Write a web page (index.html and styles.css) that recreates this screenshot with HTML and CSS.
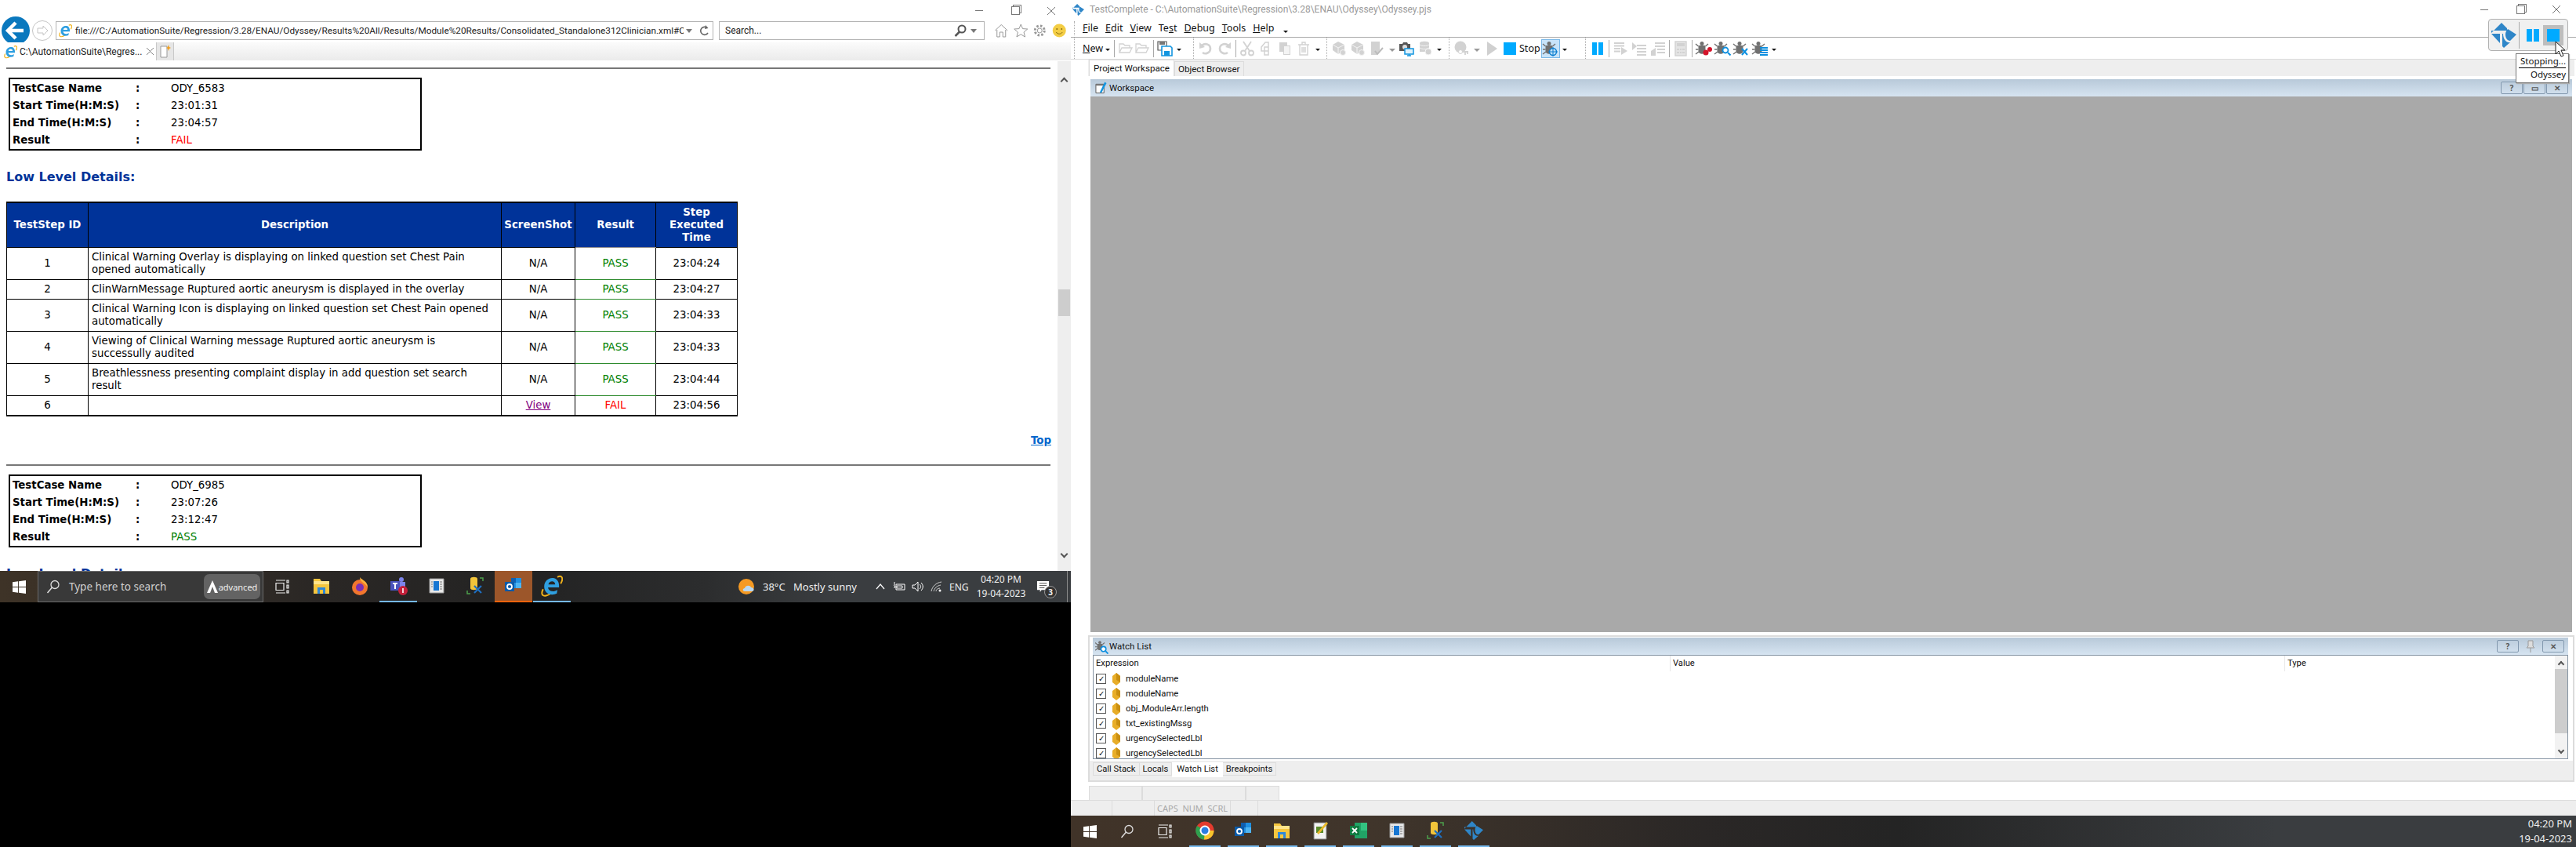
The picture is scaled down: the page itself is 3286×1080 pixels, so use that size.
FILE: index.html
```html
<!DOCTYPE html>
<html>
<head>
    <title>Consolidated results and TestComplete</title>
    <link rel="stylesheet" href="styles.css">
</head>
<body>

<svg class="defs" width="0" height="0">
    <symbol id="ie" viewBox="0 0 20 20">
        <path d="M2 13C-1 19 3 21 9 17M15 2C19 0 21 3 18 8" fill="none" stroke="#f2b31c" stroke-width="1.4"/>
        <path d="M16.5 11.5H6.5C7 15.500 12 16 15 13.500L14.500 17C9 19.500 3 17 3 10.500C3 5 8 2 12 3C15 3.700 17 7 16.500 11.500ZM6.800 8.700H13C13 5 7.500 5 6.800 8.700Z" fill="#2f9fe0"/>
    </symbol>
    <symbol id="winlogo" viewBox="0 0 18 18">
        <path d="M0 2.500 7.500 1.400V8.500H0ZM8.500 1.300 18 0V8.500H8.500ZM0 9.500H7.500V16.600L0 15.500ZM8.500 9.500H18V18L8.500 16.700Z" fill="#fff"/>
    </symbol>
    <symbol id="lens" viewBox="0 0 18 18">
        <circle cx="11" cy="6.500" r="5" fill="none" stroke="#ddd" stroke-width="1.300"/>
        <path d="M7.500 10 1.500 17" stroke="#ddd" stroke-width="1.500"/>
    </symbol>
    <symbol id="taskview" viewBox="0 0 18 18">
        <path d="M1 1H13M1 17H13M1 4.500H11V13.500H1ZM15 1H17V4H15ZM15 7H17V11H15ZM15 14H17V17H15Z" fill="none" stroke="#eee" stroke-width="1.200"/>
    </symbol>
    <symbol id="explorer" viewBox="0 0 24 24">
        <path d="M2 3H10L12 6H22V22H2Z" fill="#f5c63f"/>
        <path d="M2 6H22V10H2Z" fill="#ffe48a"/>
        <path d="M7 22V14H17V22H14V17H10V22Z" fill="#2f88d8"/>
    </symbol>
    <symbol id="box-app" viewBox="0 0 24 24">
        <path d="M3 3H21V21H3Z" fill="#e8e8e8" stroke="#999"/>
        <path d="M8 6H15V18H8Z" fill="#1776d2"/>
        <path d="M5 7H7M5 10H7M5 13H7M16 7H19M16 10H19M16 13H19M16 16H19" stroke="#777"/>
    </symbol>
    <symbol id="dbtool" viewBox="0 0 24 24">
        <path d="M6 3C6 0 15 0 15 3V15C15 18 6 18 6 15Z" fill="#f2c43a"/>
        <path d="M18 2H22V6M2 18V22H6M18 2" fill="none" stroke="#4ca04c" stroke-width="1.500"/>
        <path d="M11 12 20 21M20 12 11 21" stroke="#1f6fc0" stroke-width="2.200"/>
    </symbol>
    <symbol id="outlook" viewBox="0 0 24 24">
        <path d="M9 2H22V15H9Z" fill="#1f8fe0"/>
        <path d="M9 2H15V8H9Z" fill="#0f5fb0"/>
        <path d="M15 8H22V15H15Z" fill="#4fb4f0"/>
        <path d="M1 7H13V19H1Z" fill="#0a5aa8"/>
        <circle cx="7" cy="13" r="3" fill="none" stroke="#fff" stroke-width="1.800"/>
    </symbol>
    <symbol id="tc-logo" viewBox="0 0 32 32">
        <path d="M0 13 13 0 20 7 20 10H0ZM0 14 11 14 11 26ZM14 14H15C15 22 20 26 24 25L16 32 14 30ZM21 8 32 15 24 23C20 23 18 19 18 15 18 12 19 10 21 8Z" fill="#2f86c8"/>
    </symbol>
    <symbol id="folder" viewBox="0 0 20 20">
        <path d="M2 15V4H7L9 6H15V9M2 15 5 9H18L15 15Z" fill="none" stroke="currentColor" stroke-width="1.300"/>
    </symbol>
    <symbol id="save" viewBox="0 0 20 20">
        <path d="M1 1H12V12H1Z" fill="#fff" stroke="#555" stroke-width="1.200"/>
        <path d="M3 1H10V5H3Z" fill="#777"/>
        <path d="M6 7H17L19 9V19H6Z" fill="#fff" stroke="#1295e0" stroke-width="1.600"/>
        <path d="M9 13H16V19H9Z" fill="#1295e0"/>
    </symbol>
    <symbol id="undo" viewBox="0 0 20 20">
        <path d="M5 6C10 2 16 5 16 10C16 15 10 18 6 15" fill="none" stroke="currentColor" stroke-width="2.600"/>
        <path d="M2 2 9 8 2 10Z" fill="currentColor"/>
    </symbol>
    <symbol id="scissors" viewBox="0 0 20 20">
        <path d="M5 1 13 13M15 1 7 13" stroke="currentColor" stroke-width="1.800"/>
        <circle cx="5" cy="15.500" r="3" fill="none" stroke="currentColor" stroke-width="1.800"/>
        <circle cx="15" cy="15.500" r="3" fill="none" stroke="currentColor" stroke-width="1.800"/>
    </symbol>
    <symbol id="copy" viewBox="0 0 20 20">
        <path d="M4 8 9 2H13V13H4ZM8 8H13V18H8Z" fill="#fff" stroke="currentColor" stroke-width="1.500"/>
    </symbol>
    <symbol id="paste" viewBox="0 0 20 20">
        <path d="M3 2H13V6H17V18H8V14H3Z" fill="currentColor"/>
        <path d="M9 7H16V17H9Z" fill="#f4f4f4"/>
    </symbol>
    <symbol id="trash" viewBox="0 0 20 20">
        <path d="M3 5H17M8 5V2H12V5M5 5V18H15V5M8 8V15M10 8V15M12 8V15" fill="none" stroke="currentColor" stroke-width="1.400"/>
    </symbol>
    <symbol id="cube" viewBox="0 0 20 20">
        <path d="M9 1 17 5V12L9 17 2 12V5Z" fill="currentColor"/>
        <path d="M2 5 9 9 17 5M9 9V17" fill="none" stroke="#f4f4f4"/>
        <circle cx="15" cy="15" r="3.500" fill="currentColor" stroke="#f4f4f4"/>
    </symbol>
    <symbol id="doc-check" viewBox="0 0 20 20">
        <path d="M3 1H14V12L10 18H3Z" fill="currentColor"/>
        <path d="M8 13 11 17 18 9" fill="none" stroke="#bbb" stroke-width="2"/>
    </symbol>
    <symbol id="camera" viewBox="0 0 20 20">
        <path d="M1 4H5L6 2H11L12 4H15V13H1Z" fill="#555"/>
        <circle cx="8" cy="8" r="3" fill="#ddd"/>
        <path d="M8 10H19V17H8Z" fill="#dff1fb" stroke="#1295e0" stroke-width="1.500"/>
        <path d="M11 19H16M13.500 17V19" stroke="#1295e0" stroke-width="1.500"/>
    </symbol>
    <symbol id="stack" viewBox="0 0 20 20">
        <path d="M3 3C3 0 15 0 15 3V14H3Z" fill="currentColor"/>
        <path d="M3 5C6 7 12 7 15 5M3 9C6 11 12 11 15 9" fill="none" stroke="#f4f4f4"/>
        <circle cx="14" cy="14" r="4" fill="currentColor" stroke="#f4f4f4"/>
    </symbol>
    <symbol id="ghost" viewBox="0 0 20 20">
        <circle cx="9" cy="8" r="7.500" fill="currentColor"/>
        <path d="M9 14H19M15 14V18M18 14V17" stroke="currentColor" stroke-width="1.800"/>
        <circle cx="9" cy="14" r="2.500" fill="#fff" stroke="currentColor"/>
    </symbol>
    <symbol id="lines-in" viewBox="0 0 20 20">
        <path d="M2 3H15M2 6.500H15M2 10H10M2 13.500H10" stroke="currentColor" stroke-width="1.800"/>
        <path d="M11 8 19 13 11 18Z" fill="currentColor"/>
    </symbol>
    <symbol id="lines-step" viewBox="0 0 20 20">
        <path d="M7 6H19M7 10H19M7 14H19M7 18H19" stroke="currentColor" stroke-width="1.800"/>
        <path d="M1 2 7 7 1 12Z" fill="currentColor"/>
    </symbol>
    <symbol id="lines-out" viewBox="0 0 20 20">
        <path d="M6 3H19M6 7H19M9 11H19M9 15H19" stroke="currentColor" stroke-width="1.800"/>
        <path d="M1 13 7 9V19L1 19Z" fill="currentColor"/>
    </symbol>
    <symbol id="calc" viewBox="0 0 20 20">
        <path d="M3 1H17V19H3Z" fill="#e4e4e4" stroke="currentColor" stroke-width="1.400"/>
        <path d="M5 3H15V7H5ZM5 10H8V12H5ZM9 10H11V12H9ZM12 10H15V12H12ZM5 14H8V16H5ZM9 14H11V16H9ZM12 14H15V16H12Z" fill="currentColor"/>
    </symbol>
    <symbol id="bug" viewBox="0 0 20 20">
        <circle cx="8" cy="3.500" r="2.500" fill="#707070"/>
        <path d="M3.500 6H12.500V13C12.500 18 3.500 18 3.500 13Z" fill="#707070"/>
        <path d="M0 4 3.500 7M16 4 12.500 7M0 11H3.500M0 17 4 14" stroke="#707070" stroke-width="1.400"/>
    </symbol>
    <symbol id="pencil" viewBox="0 0 16 16">
        <path d="M1 3H12V15H1Z" fill="#fff" stroke="#555"/>
        <path d="M1 3H12V5H1Z" fill="#777"/>
        <path d="M13 0 15.500 1.500 9 14 6.500 15 7 12.500Z" fill="#1295e0"/>
    </symbol>
    <symbol id="watch-diamond" viewBox="0 0 10 16">
        <path d="M5 0 10 4V12L5 16 0 12V4Z" fill="#e8ad28"/>
        <path d="M5 0 10 4V12L5 9Z" fill="#c98f12"/>
    </symbol>
    <symbol id="close-x" viewBox="0 0 10 10">
        <path d="M0 0 10 10M10 0 0 10" stroke="#777" fill="none"/>
    </symbol>
</svg>

<div class="desktop">

    <!-- left monitor: IE with the test report -->
    <section class="screen-left">
        <div class="browser">
            <div class="win-controls">
                <span class="win-min"></span>
                <span class="win-max"></span>
                <span class="win-close"><svg><use href="#close-x"/></svg></span>
            </div>
            <div class="ie-nav">
                <svg class="back-btn" viewBox="0 0 36 36">
                    <circle cx="18" cy="18" r="18" fill="#0a78be"/>
                    <path d="M18 8 8 18 18 28M9 18H28" fill="none" stroke="#fff" stroke-width="4.500"/>
                </svg>
                <svg class="forward-btn" viewBox="0 0 26 26">
                    <circle cx="13" cy="13" r="12.500" fill="#fff" stroke="#c4c4c4"/>
                    <path d="M14 7 20 13 14 19V16H7V10H14Z" fill="#fff" stroke="#c4c4c4"/>
                </svg>
                <div class="address-box">
                    <svg class="ie-icon"><use href="#ie"/></svg>
                    <span class="address-text">file:///C:/AutomationSuite/Regression/3.28/ENAU/Odyssey/Results%20All/Results/Module%20Results/Consolidated_Standalone312Clinician.xml#C</span>
                    <span class="small-caret"></span>
                    <svg class="refresh" viewBox="0 0 14 14">
                        <path d="M10 3.500A5 5 0 1 0 11 10" fill="none" stroke="#666" stroke-width="1.600"/>
                        <path d="M8 0 11.500 4 7 5Z" fill="#666"/>
                    </svg>
                </div>
                <div class="search-box">
                    <span class="search-text">Search...</span>
                    <svg class="search-lens" viewBox="0 0 16 16">
                        <circle cx="10" cy="6" r="4.500" fill="none" stroke="#555" stroke-width="2"/>
                        <path d="M7 9.500 1.500 15" stroke="#555" stroke-width="2.500"/>
                    </svg>
                    <span class="small-caret"></span>
                </div>
                <div class="ie-tools">
                    <svg viewBox="0 0 18 18"><path d="M1 9 9 1.500 17 9M3.500 8V17H7V11H11V17H14.500V8" fill="#fff" stroke="#999"/></svg>
                    <svg viewBox="0 0 18 18"><path d="M9 1 11.300 6.600 17.500 7 12.800 11 14.300 17 9 13.800 3.700 17 5.200 11 .5 7 6.700 6.600Z" fill="#fff" stroke="#999"/></svg>
                    <svg viewBox="0 0 18 18"><circle cx="9" cy="9" r="6" fill="#fff" stroke="#999" stroke-width="3" stroke-dasharray="2.500 2.200"/><circle cx="9" cy="9" r="3" fill="#fff" stroke="#999"/></svg>
                    <svg viewBox="0 0 18 18"><circle cx="9" cy="9" r="8.500" fill="#f3cd45"/><circle cx="6" cy="7" r="1" fill="#8a6d10"/><circle cx="12" cy="7" r="1" fill="#8a6d10"/><path d="M5 11C7 14 11 14 13 11" fill="none" stroke="#8a6d10"/></svg>
                </div>
            </div>
            <div class="ie-tabs">
                <div class="ie-tab">
                    <svg class="ie-icon"><use href="#ie"/></svg>
                    <span class="ie-tab-title">C:\AutomationSuite\Regres...</span>
                    <span class="ie-tab-close"><svg><use href="#close-x"/></svg></span>
                </div>
                <div class="ie-new-tab">
                    <svg viewBox="0 0 14 18" width="14" height="18"><path d="M1 2H9V16H1Z" fill="#fff" stroke="#999"/><path d="M11 0 12 3 14 4 12 5 11 8 10 5 8 4 10 3Z" fill="#f0a020"/></svg>
                </div>
            </div>
            <div class="page-wrap">
                <div class="page">
                    <hr class="rule">
                    <table class="case-box">
                        <tr><th>TestCase Name</th><td class="colon">:</td><td>ODY_6583</td></tr>
                        <tr><th>Start Time(H:M:S)</th><td class="colon">:</td><td>23:01:31</td></tr>
                        <tr><th>End Time(H:M:S)</th><td class="colon">:</td><td>23:04:57</td></tr>
                        <tr><th>Result</th><td class="colon">:</td><td class="fail">FAIL</td></tr>
                    </table>
                    <h3 class="low-level">Low Level Details:</h3>
                    <table class="steps">
                        <colgroup>
                            <col class="col-id"><col class="col-desc"><col class="col-shot"><col class="col-res"><col class="col-time">
                        </colgroup>
                        <tr>
                            <th>TestStep ID</th><th>Description</th><th>ScreenShot</th><th class="res-head">Result</th><th>Step Executed Time</th>
                        </tr>
                        <tr>
                            <td>1</td><td class="desc">Clinical Warning Overlay is displaying on linked question set Chest Pain opened automatically</td><td>N/A</td><td class="pass">PASS</td><td>23:04:24</td>
                        </tr>
                        <tr>
                            <td>2</td><td class="desc">ClinWarnMessage Ruptured aortic aneurysm is displayed in the overlay</td><td>N/A</td><td class="pass">PASS</td><td>23:04:27</td>
                        </tr>
                        <tr>
                            <td>3</td><td class="desc">Clinical Warning Icon is displaying on linked question set Chest Pain opened automatically</td><td>N/A</td><td class="pass">PASS</td><td>23:04:33</td>
                        </tr>
                        <tr>
                            <td>4</td><td class="desc">Viewing of Clinical Warning message Ruptured aortic aneurysm is successully audited</td><td>N/A</td><td class="pass">PASS</td><td>23:04:33</td>
                        </tr>
                        <tr>
                            <td>5</td><td class="desc">Breathlessness presenting complaint display in add question set search result</td><td>N/A</td><td class="pass">PASS</td><td>23:04:44</td>
                        </tr>
                        <tr>
                            <td>6</td><td class="desc"></td><td><a class="view-link" href="#">View</a></td><td class="fail">FAIL</td><td>23:04:56</td>
                        </tr>
                    </table>
                    <div class="top-row"><a class="top-link" href="#">Top</a></div>
                    <hr class="rule rule-second">
                    <table class="case-box">
                        <tr><th>TestCase Name</th><td class="colon">:</td><td>ODY_6985</td></tr>
                        <tr><th>Start Time(H:M:S)</th><td class="colon">:</td><td>23:07:26</td></tr>
                        <tr><th>End Time(H:M:S)</th><td class="colon">:</td><td>23:12:47</td></tr>
                        <tr><th>Result</th><td class="colon">:</td><td class="pass">PASS</td></tr>
                    </table>
                    <h3 class="low-level">Low Level Details:</h3>
                </div>
                <div class="page-scroll">
                    <span class="chev chev-up"></span>
                    <div class="page-thumb"></div>
                    <span class="chev chev-down"></span>
                </div>
            </div>
        </div>

        <div class="taskbar taskbar-left">
            <div class="start-btn"><svg class="start-icon"><use href="#winlogo"/></svg></div>
            <div class="search-pill">
                <svg class="lens-icon"><use href="#lens"/></svg>
                <span class="search-hint">Type here to search</span>
                <div class="advanced-chip">
                    <svg viewBox="0 0 14 16" width="14" height="16"><path d="M7 0 14 16H10L7 8 4 16H0Z" fill="#fff"/></svg>
                    <span>advanced</span>
                </div>
            </div>
            <div class="task-view"><svg class="lens-icon"><use href="#taskview"/></svg></div>
            <div class="task-apps">
                <div class="task-app"><svg><use href="#explorer"/></svg></div>
                <div class="task-app">
                    <svg viewBox="0 0 24 24"><circle cx="12" cy="14" r="10" fill="#f2762e"/><path d="M12 1C15 5 22 6 22 14 18 7 12 8 12 1Z" fill="#fbb03b"/><circle cx="12" cy="14" r="5" fill="#7a2fb5"/></svg>
                </div>
                <div class="task-app is-open">
                    <svg viewBox="0 0 24 24"><circle cx="16" cy="4" r="3" fill="#7b83eb"/><path d="M10 7H21V17H10Z" fill="#7b83eb"/><path d="M2 6H14V18H2Z" fill="#4b53bc"/><path d="M5 9H11M8 9V16" stroke="#fff" stroke-width="2"/><circle cx="18" cy="18" r="6" fill="#c4203a"/><path d="M18 15V21" stroke="#fff" stroke-width="1.600"/></svg>
                </div>
                <div class="task-app"><svg><use href="#box-app"/></svg></div>
                <div class="task-app"><svg><use href="#dbtool"/></svg></div>
                <div class="task-app is-active"><svg><use href="#outlook"/></svg></div>
                <div class="task-app is-open"><svg class="ie-large"><use href="#ie"/></svg></div>
            </div>
            <div class="tray">
                <svg class="tray-weather" viewBox="0 0 22 22"><circle cx="10" cy="11" r="10" fill="#f59a23"/><path d="M8 17C5 17 5 13 8 13 9 9 15 9 16 12 20 12 21 17 17 17Z" fill="#b9d8f0"/></svg>
                <span class="tray-temp">38°C</span>
                <span class="tray-cond">Mostly sunny</span>
                <div class="tray-cell"><svg viewBox="0 0 14 14" width="14" height="14"><path d="M2 10 7 4 12 10" fill="none" stroke="#fff" stroke-width="1.200"/></svg></div>
                <div class="tray-cell"><svg viewBox="0 0 16 14" width="16" height="14"><path d="M4 4H15V11H4ZM1 5 3 7V8H1M2 1V5M5 6H12V9H5Z" fill="none" stroke="#fff"/></svg></div>
                <div class="tray-cell"><svg viewBox="0 0 16 14" width="16" height="14"><path d="M1 5H4L8 1V13L4 9H1ZM10 4C12 6 12 8 10 10M12 2C15 5 15 9 12 12" fill="none" stroke="#fff"/></svg></div>
                <div class="tray-cell"><svg viewBox="0 0 16 14" width="16" height="14"><path d="M1 13C2 7 7 2 14 1M4 13C5 9 8 6 13 5M7 13C7 11 9 9 12 9" fill="none" stroke="#ccc"/><circle cx="12" cy="12" r="1.500" fill="#fff"/></svg></div>
                <span class="tray-lang">ENG</span>
                <div class="clock"><span>04:20 PM</span><span>19-04-2023</span></div>
                <div class="notify">
                    <svg viewBox="0 0 18 18" width="17" height="17"><path d="M1 1H17V13H7L5 16V13H1Z" fill="#fff"/><path d="M4 4H14M4 7H14M4 10H11" stroke="#444"/></svg>
                    <span class="notify-count">3</span>
                </div>
            </div>
        </div>
        <div class="blackout"></div>
    </section>

    <!-- right monitor: TestComplete -->
    <section class="screen-right">
        <div class="tc-title">
            <svg class="tc-mini"><use href="#tc-logo"/></svg>
            <span class="tc-title-text">TestComplete - C:\AutomationSuite\Regression\3.28\ENAU\Odyssey\Odyssey.pjs</span>
            <div class="win-controls tc-controls">
                <span class="win-min"></span>
                <span class="win-max"></span>
                <span class="win-close"><svg><use href="#close-x"/></svg></span>
            </div>
        </div>
        <div class="tc-menu">
            <span class="grip"></span>
            <span class="menu-item"><u>F</u>ile</span>
            <span class="menu-item"><u>E</u>dit</span>
            <span class="menu-item"><u>V</u>iew</span>
            <span class="menu-item">Te<u>s</u>t</span>
            <span class="menu-item"><u>D</u>ebug</span>
            <span class="menu-item"><u>T</u>ools</span>
            <span class="menu-item"><u>H</u>elp</span>
            <span class="drop"></span>
        </div>
        <div class="tc-toolbar">
            <div class="tb-section tb-one">
                <span class="tb-new"><u>N</u>ew</span><span class="drop"></span>
                <span class="tb-sep"></span>
                <svg class="ti off"><use href="#folder"/></svg>
                <svg class="ti off tight"><use href="#folder"/></svg>
                <span class="tb-sep"></span>
                <svg class="ti"><use href="#save"/></svg>
                <span class="drop"></span>
            </div>
            <div class="tb-section tb-two">
                <svg class="ti off"><use href="#undo"/></svg>
                <svg class="ti off flip"><use href="#undo"/></svg>
                <span class="tb-sep"></span>
                <svg class="ti off"><use href="#scissors"/></svg>
                <svg class="ti off"><use href="#copy"/></svg>
                <svg class="ti off"><use href="#paste"/></svg>
                <svg class="ti off"><use href="#trash"/></svg>
                <span class="drop"></span>
            </div>
            <div class="tb-section tb-three">
                <svg class="ti off"><use href="#cube"/></svg>
                <svg class="ti off"><use href="#cube"/></svg>
                <svg class="ti off"><use href="#doc-check"/></svg>
                <span class="drop drop-wide"></span>
                <svg class="ti"><use href="#camera"/></svg>
                <svg class="ti off"><use href="#stack"/></svg>
                <span class="drop"></span>
            </div>
            <div class="tb-section tb-four">
                <svg class="ti off"><use href="#ghost"/></svg>
                <span class="drop drop-wide"></span>
                <svg class="ti off" viewBox="0 0 20 20"><path d="M5 1 18 10 5 19Z" fill="#d0d0d0"/></svg>
                <svg class="ti" viewBox="0 0 20 20"><path d="M2 2H18V18H2Z" fill="#00aaff"/></svg>
                <span class="tb-stop">Stop</span>
                <div class="bug-hl">
                    <svg class="ti"><use href="#bug"/></svg>
                    <svg class="bug-target" viewBox="0 0 12 12"><circle cx="6" cy="6" r="4.500" fill="#bfe0f7" stroke="#0c7fd0" stroke-width="1.400"/><path d="M6 0V12M0 6H12" stroke="#0c7fd0"/></svg>
                </div>
                <span class="drop"></span>
            </div>
            <div class="tb-section tb-five">
                <svg class="ti" viewBox="0 0 20 20"><path d="M3 2H9V18H3ZM11 2H17V18H11Z" fill="#00aaff"/></svg>
                <span class="tb-sep"></span>
                <svg class="ti off"><use href="#lines-in"/></svg>
                <svg class="ti off"><use href="#lines-step"/></svg>
                <svg class="ti off"><use href="#lines-out"/></svg>
                <span class="tb-sep"></span>
                <svg class="ti off"><use href="#calc"/></svg>
                <span class="tb-sep"></span>
                <div class="bug-wrap"><svg class="ti"><use href="#bug"/></svg><svg class="bug-target" viewBox="0 0 12 12"><circle cx="4" cy="8" r="3.500" fill="#d4142a"/><circle cx="9" cy="4" r="3" fill="#d4142a"/></svg></div>
                <div class="bug-wrap"><svg class="ti"><use href="#bug"/></svg><svg class="bug-target" viewBox="0 0 12 12"><circle cx="5" cy="5" r="3.500" fill="#fff" stroke="#0c8fe0" stroke-width="1.800"/><path d="M8 8 11.500 11.500" stroke="#0c8fe0" stroke-width="2"/></svg></div>
                <div class="bug-wrap"><svg class="ti"><use href="#bug"/></svg><svg class="bug-target" viewBox="0 0 12 12"><path d="M2 3 9 11M9 3 2 11" stroke="#0c8fe0" stroke-width="2"/></svg></div>
                <div class="bug-wrap"><svg class="ti"><use href="#bug"/></svg><svg class="bug-target" viewBox="0 0 12 12"><path d="M1 2H11M1 5H11M1 8H11M1 11H11" stroke="#0c8fe0" stroke-width="2"/></svg></div>
                <span class="drop"></span>
            </div>
        </div>

        <div class="dock">
            <div class="dock-tabs">
                <span class="dock-tab is-current">Project Workspace</span>
                <span class="dock-tab">Object Browser</span>
            </div>
            <div class="workspace">
                <div class="panel-head">
                    <svg class="panel-icon"><use href="#pencil"/></svg>
                    <span class="panel-name">Workspace</span>
                    <div class="panel-btns">
                        <span class="panel-btn">?</span>
                        <span class="panel-btn">▭</span>
                        <span class="panel-btn">✕</span>
                    </div>
                </div>
                <div class="workspace-body"></div>
            </div>
            <div class="watch">
                <div class="panel-head">
                    <div class="bug-wrap">
                        <svg class="panel-icon"><use href="#bug"/></svg>
                        <svg class="watch-lens" viewBox="0 0 12 12"><circle cx="5" cy="5" r="3.500" fill="#fff" stroke="#0c8fe0" stroke-width="1.800"/><path d="M8 8 11.500 11.500" stroke="#0c8fe0" stroke-width="2"/></svg>
                    </div>
                    <span class="panel-name">Watch List</span>
                    <div class="panel-btns">
                        <span class="panel-btn">?</span>
                        <svg class="pin" viewBox="0 0 14 16" width="14" height="16"><path d="M4 1H10V8L12 10H2L4 8ZM7 10V16" fill="#ddd" stroke="#999"/></svg>
                        <span class="panel-btn">✕</span>
                    </div>
                </div>
                <div class="watch-list">
                    <div class="watch-cols">
                        <span class="watch-col">Expression</span>
                        <span class="watch-col">Value</span>
                        <span class="watch-col">Type</span>
                    </div>
                    <div class="watch-row"><span class="check">✓</span><svg class="diamond"><use href="#watch-diamond"/></svg>moduleName</div>
                    <div class="watch-row"><span class="check">✓</span><svg class="diamond"><use href="#watch-diamond"/></svg>moduleName</div>
                    <div class="watch-row"><span class="check">✓</span><svg class="diamond"><use href="#watch-diamond"/></svg>obj_ModuleArr.length</div>
                    <div class="watch-row"><span class="check">✓</span><svg class="diamond"><use href="#watch-diamond"/></svg>txt_existingMssg</div>
                    <div class="watch-row"><span class="check">✓</span><svg class="diamond"><use href="#watch-diamond"/></svg>urgencySelectedLbl</div>
                    <div class="watch-row"><span class="check">✓</span><svg class="diamond"><use href="#watch-diamond"/></svg>urgencySelectedLbl</div>
                    <div class="watch-scroll">
                        <span class="chev chev-up small"></span>
                        <div class="watch-thumb"></div>
                        <span class="chev chev-down small"></span>
                    </div>
                </div>
                <div class="watch-tabs">
                    <span class="watch-tab">Call Stack</span>
                    <span class="watch-tab">Locals</span>
                    <span class="watch-tab is-current">Watch List</span>
                    <span class="watch-tab">Breakpoints</span>
                </div>
            </div>
        </div>

        <div class="status-boxes">
            <span class="status-box box-a"></span>
            <span class="status-box box-b"></span>
            <span class="status-box box-c"></span>
        </div>
        <div class="status-bar">
            <span class="status-cell cell-a"></span>
            <span class="status-cell cell-b"></span>
            <span class="status-cell cell-c">CAPS&nbsp; NUM&nbsp; SCRL</span>
            <span class="status-cell cell-d"></span>
        </div>

        <div class="taskbar taskbar-right">
            <div class="start-btn"><svg class="start-icon"><use href="#winlogo"/></svg></div>
            <div class="right-btn"><svg class="lens-icon"><use href="#lens"/></svg></div>
            <div class="right-btn"><svg class="lens-icon"><use href="#taskview"/></svg></div>
            <div class="task-apps right-apps">
                <div class="task-app is-open">
                    <svg viewBox="0 0 24 24"><circle cx="12" cy="12" r="11.500" fill="#e33b2e"/><path d="M12 12 2 6A11.500 11.500 0 0 0 12 23.500Z" fill="#2ea04e"/><path d="M12 12H23.500A11.500 11.500 0 0 1 11 23.500Z" fill="#f7c52c"/><circle cx="12" cy="12" r="5.500" fill="#2a7de1" stroke="#fff" stroke-width="2"/></svg>
                </div>
                <div class="task-app is-open"><svg><use href="#outlook"/></svg></div>
                <div class="task-app is-open"><svg><use href="#explorer"/></svg></div>
                <div class="task-app is-open">
                    <svg viewBox="0 0 24 24"><path d="M4 2H20V23H4Z" fill="#f2f2f2" stroke="#777"/><path d="M7 7H16V15H7Z" fill="#5a8a2a"/><path d="M8 15 20 1 22 3 10 17Z" fill="#e8b82a"/></svg>
                </div>
                <div class="task-app is-open">
                    <svg viewBox="0 0 24 24"><path d="M7 2H23V22H7Z" fill="#21a366"/><path d="M15 2H23V12H15Z" fill="#33c481"/><path d="M1 6H13V18H1Z" fill="#107c41"/><path d="M4 9 10 15M10 9 4 15" stroke="#fff" stroke-width="1.800"/></svg>
                </div>
                <div class="task-app is-open"><svg><use href="#box-app"/></svg></div>
                <div class="task-app is-open"><svg><use href="#dbtool"/></svg></div>
                <div class="task-app is-open"><svg><use href="#tc-logo"/></svg></div>
            </div>
            <div class="clock clock-right"><span>04:20 PM</span><span>19-04-2023</span></div>
        </div>

        <!-- floating TestComplete run widget -->
        <div class="run-widget">
            <svg class="run-logo"><use href="#tc-logo"/></svg>
            <span class="run-sep"></span>
            <svg class="run-pause" viewBox="0 0 16 16"><path d="M0 0H7V16H0ZM9 0H16V16H9Z" fill="#00aaff"/></svg>
            <span class="run-stop"><span class="run-stop-fill"></span></span>
        </div>
        <div class="run-tip">
            <div class="run-tip-top">Stopping...</div>
            <div class="run-tip-name">Odyssey</div>
        </div>
        <svg class="mouse" viewBox="0 0 14 22"><path d="M1 1V17L5 13 8 20 11 19 8 12H13Z" fill="#fff" stroke="#222"/></svg>
    </section>
</div>

</body>
</html>
```
FILE: styles.css
```css
:root {
    --report-blue: #003399;
    --ui-font: "Noto Sans", sans-serif;
    --narrow-font: Roboto, sans-serif;
    --page-font: "DejaVu Sans", sans-serif;
    --line: #dcdcdc;
    --bar-bg: #eeeeee;
}

* {
    box-sizing: border-box;
}

body {
    margin: 0;
    background: #000;
    font-family: var(--ui-font);
    overflow: hidden;
}

.defs {
    position: absolute;
}

.desktop {
    display: flex;
    width: 3286px;
    height: 1080px;
}

/* left monitor */
.screen-left {
    width: 1366px;
    height: 1080px;
    flex: none;
    display: flex;
    flex-direction: column;
    background: #000;
}

.browser {
    height: 728px;
    background: #fff;
    display: flex;
    flex-direction: column;
}

.win-controls {
    display: flex;
    justify-content: flex-end;
    height: 27px;
    padding-right: 2px;
}

.win-controls span {
    width: 46px;
    height: 27px;
    position: relative;
    display: flex;
    align-items: center;
    justify-content: center;
}

.win-close svg {
    width: 10px;
    height: 10px;
}

.win-min::before {
    content: "";
    width: 10px;
    height: 1px;
    background: #777;
}

.win-max::before {
    content: "";
    width: 9px;
    height: 9px;
    border: 1px solid #777;
    box-shadow: 2px -2px 0 -1px #fff, 2px -2px 0 0 #777;
}

.ie-nav {
    display: flex;
    align-items: center;
    height: 24px;
    margin-bottom: 3px;
    padding-left: 2px;
}

.back-btn {
    width: 36px;
    height: 36px;
    flex: none;
    margin-top: 0;
}

.forward-btn {
    width: 26px;
    height: 26px;
    flex: none;
    margin: 0 4px 0 3px;
}

.address-box,
.search-box {
    height: 24px;
    border: 1px solid #b4b4b4;
    display: flex;
    align-items: center;
    font-size: 12px;
    font-family: var(--narrow-font);
    color: #222;
}

.address-box {
    width: 839px;
    padding-left: 3px;
}

.ie-icon {
    width: 17px;
    height: 18px;
    flex: none;
}

.address-text {
    width: 776px;
    margin-left: 4px;
    overflow: hidden;
    white-space: nowrap;
    font-size: 11.800px;
}

.small-caret {
    width: 0;
    height: 0;
    margin-left: 3px;
    border-left: 4px solid transparent;
    border-right: 4px solid transparent;
    border-top: 5px solid #777;
}

.refresh {
    width: 14px;
    height: 14px;
    margin-left: 9px;
}

.search-box {
    width: 339px;
    margin-left: 7px;
    padding-left: 7px;
}

.search-text {
    flex: 1;
}

.search-lens {
    width: 16px;
    height: 16px;
}

.search-box .small-caret {
    margin: 0 9px 0 5px;
}

.ie-tools {
    display: flex;
    padding-left: 9px;
}

.ie-tools svg {
    width: 24.5px;
    height: 18px;
}

.ie-tabs {
    position: relative;
    display: flex;
    height: 23px;
    background: linear-gradient(#fbfbfb, #ebebeb);
}

.ie-tab {
    width: 200px;
    display: flex;
    align-items: center;
    padding-left: 5px;
    background: #fff;
    border-right: 1px solid #c8c8c8;
    font-size: 12px;
    font-family: var(--narrow-font);
    color: #222;
}

.ie-tab-title {
    margin-left: 3px;
    white-space: nowrap;
}

.ie-tab-close {
    display: flex;
    margin-left: 6px;
}

.ie-tab-close svg {
    width: 9px;
    height: 9px;
}

.ie-new-tab {
    width: 22px;
    display: flex;
    align-items: center;
    justify-content: center;
    background: #e6e6e6;
    border-right: 1px solid #c8c8c8;
}

.page-wrap {
    flex: 1;
    display: flex;
    min-height: 0;
}

.page {
    flex: 1;
    overflow: hidden;
    padding: 9px 9px 0 8px;
    font-family: var(--page-font);
    font-size: 13.330px;
    color: #000;
}

.rule {
    height: 2px;
    margin: 0 0 11px;
    border: 0;
    background: #777;
}

.rule-second {
    margin-top: 20px;
}

.case-box {
    width: 527px;
    height: 93px;
    margin-left: 3px;
    border: 2px solid #000;
    border-spacing: 0;
    table-layout: fixed;
}

.case-box th {
    width: 160px;
    padding: 0 0 0 3px;
    text-align: left;
    font-weight: bold;
    white-space: nowrap;
}

.case-box td {
    padding: 0;
}

.case-box .colon {
    width: 45px;
    font-weight: bold;
}

.low-level {
    margin: 24px 0 21px;
    height: 20px;
    font-size: 16px;
    line-height: 20px;
    color: var(--report-blue);
}

.steps {
    width: 932px;
    border-collapse: collapse;
    table-layout: fixed;
    text-align: center;
    border: 1px solid #000;
    border-top-width: 2px;
    border-bottom-width: 2px;
}

.col-id { width: 104px; }
.col-desc { width: 527px; }
.col-shot { width: 94px; }
.col-res { width: 103px; }
.col-time { width: 104px; }

.steps th {
    padding: 4px 2px;
    background: var(--report-blue);
    color: #fff;
    border: 1px solid #000;
    line-height: 16px;
}

.steps .res-head {
    border-bottom-color: #8a8a8a;
}

.steps td {
    padding: 4px 4px;
    border: 1px solid #000;
    line-height: 16px;
}

.steps .desc {
    padding-right: 6px;
    text-align: left;
}

.steps .pass {
    border-bottom-color: #2e8b2e;
}

.pass {
    color: #008000;
}

.fail {
    color: #ff0000;
}

.view-link {
    color: #800080;
}

.top-row {
    height: 20px;
    margin-top: 21px;
    text-align: right;
}

.top-link {
    margin-right: -1px;
    font-weight: bold;
    line-height: 20px;
    color: #0066cc;
}

.page-scroll {
    width: 17px;
    flex: none;
    margin-top: 1px;
    background: var(--bar-bg);
    position: relative;
}

.page-thumb {
    position: absolute;
    top: 291px;
    left: 1px;
    width: 15px;
    height: 34px;
    background: #cdcdcd;
}

.chev {
    position: absolute;
    left: 5px;
    width: 7px;
    height: 7px;
    border: solid #555;
    border-width: 2px 0 0 2px;
}

.chev-up {
    top: 22px;
    transform: rotate(45deg);
}

.chev-down {
    bottom: 18px;
    transform: rotate(225deg);
}

/* taskbars */
.taskbar {
    display: flex;
    align-items: stretch;
    height: 40px;
    flex: none;
    color: #f0f0f0;
}

.taskbar-left {
    background: linear-gradient(90deg, #3e3327 0, #2a2725 30%, #232323 50%, #2c2d2e 66%, #3a3d40 78%);
}

.taskbar-right {
    background: linear-gradient(90deg, #403328 0, #40352b 20%, #2a2726 42%, #242424 55%, #3a3d40 80%);
}

.start-btn {
    width: 48px;
    display: flex;
    align-items: center;
    justify-content: center;
}

.start-icon {
    width: 17px;
    height: 17px;
}

.search-pill {
    width: 288px;
    display: flex;
    align-items: center;
    background: #393939;
    border: 1px solid #6a6a6a;
    padding: 0 3px 0 10px;
}

.lens-icon {
    width: 18px;
    height: 18px;
}

.search-hint {
    margin-left: 11px;
    flex: 1;
    font-size: 13.500px;
    color: #cfcfcf;
}

.advanced-chip {
    width: 72px;
    height: 32px;
    display: flex;
    align-items: center;
    justify-content: center;
    gap: 1px;
    background: #636363;
    border-radius: 7px;
    font-size: 11px;
}

.task-view,
.right-btn {
    width: 48px;
    display: flex;
    align-items: center;
    justify-content: center;
}

.task-apps {
    display: flex;
    gap: 1px;
    margin-left: 2px;
}

.task-app {
    width: 48px;
    display: flex;
    align-items: center;
    justify-content: center;
    border-bottom: 2px solid transparent;
}

.task-app svg {
    width: 24px;
    height: 24px;
}

.task-app .ie-large {
    width: 28px;
    height: 28px;
}

.task-app.is-open {
    border-bottom-color: #76b9ed;
}

.task-app.is-active {
    background: #9c562a;
    border-bottom-color: #f7630c;
}

.tray {
    margin-left: auto;
    width: 420px;
    display: flex;
    align-items: center;
    font-size: 13px;
    border-right: 1px solid #8a8a8a;
    margin-right: 4px;
}

.tray-weather {
    width: 22px;
    height: 22px;
    flex: none;
}

.tray-temp {
    margin-left: 9px;
    width: 39px;
}

.tray-cond {
    width: 99px;
}

.tray-cell {
    width: 24px;
    display: flex;
    justify-content: center;
}

.tray-lang {
    margin-left: 4px;
    width: 34px;
    font-size: 12px;
}

.clock {
    width: 64px;
    display: flex;
    flex-direction: column;
    align-items: center;
    line-height: 18px;
    font-size: 12px;
}

.notify {
    position: relative;
    width: 42px;
    display: flex;
    justify-content: center;
}

.notify-count {
    position: absolute;
    left: 23px;
    top: 7px;
    width: 16px;
    height: 16px;
    border: 1px solid #999;
    border-radius: 50%;
    background: #333;
    text-align: center;
    line-height: 14px;
    font-size: 10px;
    font-weight: bold;
}

.blackout {
    flex: 1;
    background: #000;
}

/* right monitor */
.screen-right {
    position: relative;
    width: 1920px;
    height: 1080px;
    flex: none;
    display: flex;
    flex-direction: column;
    background: #fff;
    font-size: 12px;
    color: #111;
}

.tc-title {
    height: 24px;
    display: flex;
    align-items: center;
    padding-left: 2px;
}

.tc-mini {
    width: 15px;
    height: 15px;
    margin-left: 0;
}

.tc-title-text {
    margin-left: 7px;
    color: #9a9a9a;
    font-family: var(--narrow-font);
    font-size: 12px;
}

.tc-controls {
    margin-left: auto;
    height: 20px;
}

.tc-controls span {
    height: 20px;
}

.tc-menu {
    height: 24px;
    display: flex;
    align-items: center;
    padding-left: 4px;
    border-bottom: 1px solid #a8a8a8;
}

.grip {
    width: 1px;
    height: 18px;
    margin-right: 10px;
    border-left: 1px dotted #aaa;
}

.menu-item {
    margin-right: 9px;
    font-size: 12.500px;
}

.drop {
    display: inline-block;
    width: 0;
    height: 0;
    flex: none;
    margin: 4px 3px 0;
    border-left: 3px solid transparent;
    border-right: 3px solid transparent;
    border-top: 3px solid #111;
    align-self: center;
}

.tc-menu .drop {
    margin-top: 10px;
}

.drop-wide {
    margin-left: 4px;
    margin-right: 2px;
    border-left-width: 4px;
    border-right-width: 4px;
    border-top-color: #999;
    border-top-width: 4px;
}

.tc-toolbar {
    height: 28px;
    display: flex;
    padding-left: 4px;
    border-bottom: 1px solid var(--line);
}

.tb-section {
    display: flex;
    align-items: center;
    height: 27px;
    padding-left: 3px;
    border-left: 1px dotted #aaa;
    flex: none;
}

.tb-one { width: 152px; padding-left: 10px; }
.tb-two { width: 170px; }
.tb-three { width: 156px; }
.tb-four { width: 174px; }
.tb-five { width: 270px; }

.tb-new {
    width: 27px;
    font-size: 12.500px;
}

.tb-new + .drop {
    margin-left: 2px;
}

.tb-sep {
    width: 1px;
    height: 22px;
    margin: 0 2px;
    flex: none;
    background: #a8a8a8;
}

.tb-one .tb-sep:first-of-type {
    margin-left: 5px;
}

.ti {
    width: 24px;
    height: 20px;
    flex: none;
    color: #555;
}

.ti.off {
    color: #d2d2d2;
}

.ti.tight {
    margin-left: -3px;
}

.ti.flip {
    transform: scaleX(-1);
}

.tb-stop {
    margin-left: 0;
    width: 28px;
    font-size: 12.500px;
}

.bug-hl,
.bug-wrap {
    position: relative;
    display: flex;
    align-items: center;
    flex: none;
}

.bug-hl {
    width: 24px;
    height: 24px;
    background: #c8e4fa;
    border: 1px solid #7ab8e8;
    margin-left: 0;
}

.bug-hl .ti {
    margin-left: -1px;
}

.bug-target {
    position: absolute;
    right: 2px;
    bottom: 1px;
    width: 12px;
    height: 12px;
}

.bug-wrap .bug-target {
    right: 1px;
    bottom: 1px;
}

/* docked panels */
.dock {
    height: 926px;
    flex: none;
    display: flex;
    flex-direction: column;
    margin: 0 2px 0 22px;
}

.dock-tabs {
    height: 22px;
    flex: none;
    display: flex;
    align-items: flex-end;
    padding-left: 1px;
    background: var(--bar-bg);
    border-bottom: 1px solid #fff;
}

.dock-tab {
    height: 19px;
    padding: 0 4px;
    border: 1px solid var(--line);
    border-bottom: 0;
    font-family: var(--narrow-font);
    font-size: 11.600px;
    line-height: 18px;
    white-space: nowrap;
}

.dock-tab.is-current {
    height: 21px;
    padding: 1px 5px 0;
    background: #fff;
}

.workspace {
    flex: 1;
    margin: 3px 3px 4px;
    display: flex;
    flex-direction: column;
}

.panel-head {
    height: 22px;
    flex: none;
    display: flex;
    align-items: center;
    padding-left: 6px;
    background: linear-gradient(#b8c9d9, #d6e4f1);
}

.panel-icon {
    width: 15px;
    height: 16px;
    flex: none;
}

.panel-name {
    margin-left: 3px;
    font-family: var(--narrow-font);
    font-size: 11.500px;
}

.panel-btns {
    margin-left: auto;
    display: flex;
    align-items: center;
    gap: 1px;
    padding-right: 5px;
}

.panel-btn {
    width: 28px;
    height: 16px;
    border: 1px solid #8298ae;
    border-radius: 2px;
    text-align: center;
    font-size: 10px;
    line-height: 14px;
    font-weight: bold;
    color: #555;
}

.workspace-body {
    flex: 1;
    background: #a9a9a9;
}

.watch {
    height: 187px;
    flex: none;
    margin-bottom: 5px;
    border: 2px solid var(--line);
    padding: 1px 6px 0 4px;
    display: flex;
    flex-direction: column;
    background: linear-gradient(#fff 158px, var(--bar-bg) 158px);
}

.watch .panel-btns {
    gap: 0;
}

.watch .panel-head {
    padding-left: 3px;
}

.watch-lens {
    position: absolute;
    right: -2px;
    bottom: -2px;
    width: 11px;
    height: 11px;
}

.pin {
    margin: 0 8px;
}

.watch-list {
    position: relative;
    height: 133px;
    flex: none;
    border: 1px solid #8594a3;
    background: #fff;
    overflow: hidden;
    font-family: var(--narrow-font);
    font-size: 11.200px;
}

.watch-cols {
    display: grid;
    grid-template-columns: 736px 784px 1fr;
    height: 20px;
}

.watch-col {
    padding-left: 3px;
    border-right: 1px solid #e6e6e6;
    line-height: 20px;
}

.watch-col:last-child {
    border-right: 0;
}

.watch-row {
    display: flex;
    align-items: center;
    height: 19px;
    padding-left: 3px;
}

.check {
    width: 13px;
    height: 13px;
    flex: none;
    border: 1px solid #555;
    text-align: center;
    line-height: 11px;
    font-size: 10px;
}

.diamond {
    width: 10px;
    height: 16px;
    flex: none;
    margin: 0 7px 0 8px;
}

.watch-scroll {
    position: absolute;
    top: 0;
    right: 0;
    width: 16px;
    height: 131px;
    background: #f2f2f2;
}

.watch-thumb {
    position: absolute;
    top: 17px;
    left: 0;
    width: 16px;
    height: 82px;
    background: #cdcdcd;
}

.chev.small {
    left: 5px;
    width: 6px;
    height: 6px;
}

.chev-up.small {
    top: 8px;
}

.chev-down.small {
    bottom: 7px;
}

.watch-tabs {
    display: flex;
    margin-top: 4px;
    height: 17px;
    font-family: var(--narrow-font);
    font-size: 11.200px;
}

.watch-tab {
    padding: 0 4px;
    border: 1px solid var(--line);
    border-left: 0;
    line-height: 15px;
    white-space: nowrap;
}

.watch-tab:first-child {
    border-left: 1px solid var(--line);
}

.watch-tab.is-current {
    height: 19px;
    padding: 1px 6px;
    background: #fff;
    border: 0;
}

.status-boxes {
    height: 18px;
    flex: none;
    display: flex;
    padding-left: 23px;
}

.status-box {
    background: var(--bar-bg);
    border: 1px solid var(--line);
    border-bottom: 0;
    border-left-width: 1px;
}

.box-a { width: 68px; }
.box-b { width: 132px; }
.box-c { width: 43px; }

.status-bar {
    height: 20px;
    flex: none;
    display: flex;
    background: var(--bar-bg);
    border-top: 1px solid var(--line);
}

.status-cell {
    border-right: 1px solid var(--line);
    line-height: 19px;
    font-size: 11px;
    color: #a8a8a8;
    white-space: nowrap;
}

.cell-a { width: 53px; }
.cell-b { width: 54px; }
.cell-c { width: 97px; padding-left: 3px; }
.cell-d { width: 35px; }

.right-apps {
    margin-left: 3px;
    gap: 1px;
}

.taskbar-right .task-app {
    width: 40px;
    margin: 0 4px 0 4px;
}

.clock-right {
    width: auto;
    margin-left: auto;
    margin-right: 5px;
    justify-content: center;
    align-items: flex-end;
    font-size: 13px;
    line-height: 19px;
    white-space: nowrap;
}

/* floating run widget, tooltip and pointer */
.run-widget {
    position: absolute;
    top: 24px;
    left: 1808px;
    width: 102px;
    height: 41px;
    display: flex;
    align-items: center;
    background: #f0f0f0;
    border: 1px solid #b0b0b0;
    border-radius: 4px;
    padding-left: 3px;
}

.run-logo {
    width: 32px;
    height: 32px;
    flex: none;
}

.run-sep {
    width: 1px;
    height: 34px;
    margin: 0 9px 0 3px;
    background: #aaa;
}

.run-pause {
    width: 16px;
    height: 16px;
    flex: none;
}

.run-stop {
    width: 26px;
    height: 26px;
    margin-left: 5px;
    display: flex;
    align-items: center;
    justify-content: center;
    background: #bdbdbd;
}

.run-stop-fill {
    width: 16px;
    height: 16px;
    background: #00aaff;
}

.run-tip {
    position: absolute;
    top: 68px;
    left: 1843px;
    width: 68px;
    height: 38px;
    padding: 1px 3px;
    background: #fff;
    border: 1px solid #777;
    box-shadow: 1px 1px 1px #aaa;
    font-size: 11.500px;
    line-height: 15px;
    color: #111;
}

.run-tip-top {
    height: 17px;
    border-bottom: 1px solid #000;
    text-align: right;
}

.run-tip-name {
    text-align: right;
}

.mouse {
    position: absolute;
    top: 52px;
    left: 1893px;
    width: 14px;
    height: 22px;
}
```
